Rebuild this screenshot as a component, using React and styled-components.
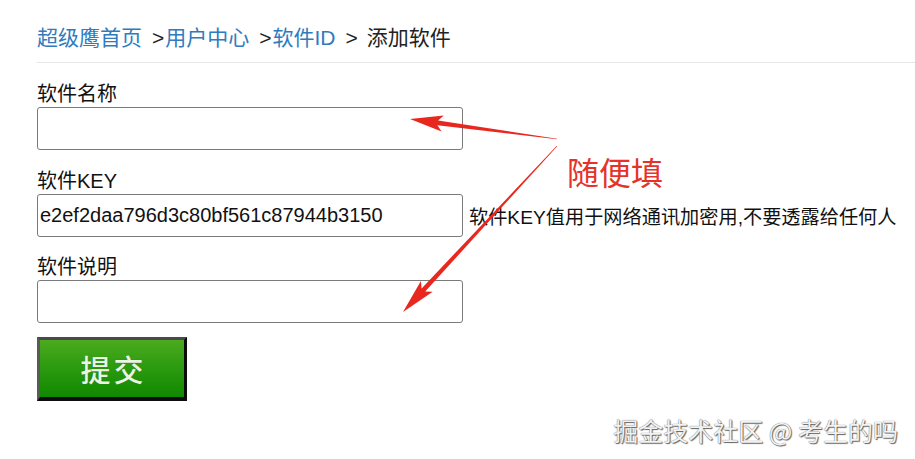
import styled, { createGlobalStyle } from 'styled-components'

const GlobalStyle = createGlobalStyle`
  html, body {
    margin: 0;
    padding: 0;
    background: #fff;
  }
  body {
    font-family: "Liberation Sans", "Noto Sans CJK SC", sans-serif;
  }
`

const Page = styled.div`
  position: relative;
  width: 915px;
  height: 459px;
  overflow: hidden;
  background: #fff;
`

const Breadcrumb = styled.div`
  margin-left: 37px;
  height: 63px;
  border-bottom: 1px solid #e6e6e6;
  display: flex;
  align-items: flex-start;
  padding-top: 24px;
  box-sizing: border-box;
  font-size: 21px;
  line-height: 28px;
  color: #222;
  white-space: pre;
`

const Crumb = styled.a`
  color: #2f7bbd;
  text-decoration: none;
`

const Sep = styled.span`
  margin: 0 ${p => p.$right || 1}px 0 ${p => p.$left || 10}px;
`

const Form = styled.div`
  padding: 19px 0 0 37px;
  display: flex;
  flex-direction: column;
`

const Field = styled.div`
  display: flex;
  flex-direction: column;
  margin-bottom: ${p => p.$gap || 18}px;
`

const Label = styled.div`
  font-size: 20px;
  line-height: 24px;
  color: #111;
  margin-bottom: 1px;
`

const Row = styled.div`
  display: flex;
  align-items: center;
`

const Input = styled.input`
  width: 426px;
  height: 43px;
  box-sizing: border-box;
  border: 1px solid #7a7a7a;
  border-radius: 3px;
  padding: 0 2px;
  font-family: "Liberation Sans", sans-serif;
  font-size: 20px;
  color: #111;
  background: #fff;
  outline: none;
`

const Hint = styled.span`
  margin-left: 6px;
  font-size: 19.2px;
  color: #111;
  white-space: nowrap;
`

const SubmitButton = styled.button`
  width: 150px;
  height: 64px;
  box-sizing: border-box;
  border-style: solid;
  border-width: 3px 3px 4px 3px;
  border-color: #4a4a4a #0c0c0c #0c0c0c #5a5a5a;
  background: linear-gradient(to bottom, #4caa1e 0%, #2e9c10 45%, #0f8800 100%);
  color: #e9f4e2;
  font-family: "Noto Sans CJK SC", sans-serif;
  font-size: 30px;
  font-weight: 500;
  letter-spacing: 3px;
  padding: 0 0 2px 3px;
  text-shadow: 0 0 1px #2a6a10;
  cursor: pointer;
`

const Note = styled.div`
  position: absolute;
  left: 567px;
  top: 148px;
  font-family: "Noto Sans CJK SC", sans-serif;
  font-size: 32px;
  color: #e5332a;
`

const Arrows = styled.svg`
  position: absolute;
  left: 0;
  top: 0;
  pointer-events: none;
`

const Watermark = styled.div`
  position: absolute;
  right: 17px;
  top: 412px;
  font-family: "Noto Sans CJK SC", sans-serif;
  font-size: 25px;
  color: #f2f2f2;
  text-shadow: 0 0 1px #444, 1px 1px 1px #666;
  white-space: pre;
`

function arrowPoints(tip, tail, headLen = 28, headHalf = 8, shaftHalf = 2.4, tailHalf = 0.3) {
  const dx = tail[0] - tip[0]
  const dy = tail[1] - tip[1]
  const len = Math.hypot(dx, dy)
  const ux = dx / len
  const uy = dy / len
  const nx = -uy
  const ny = ux
  const bx = tip[0] + ux * headLen
  const by = tip[1] + uy * headLen
  const cx = tip[0] + ux * (headLen + 5)
  const cy = tip[1] + uy * (headLen + 5)
  const pts = [
    tip,
    [cx + nx * headHalf, cy + ny * headHalf],
    [bx + nx * shaftHalf, by + ny * shaftHalf],
    [tail[0] + nx * tailHalf, tail[1] + ny * tailHalf],
    [tail[0] - nx * tailHalf, tail[1] - ny * tailHalf],
    [bx - nx * shaftHalf, by - ny * shaftHalf],
    [cx - nx * headHalf, cy - ny * headHalf],
  ]
  return pts.map(p => p[0].toFixed(1) + ',' + p[1].toFixed(1)).join(' ')
}

function App() {
  return (
    <Page>
      <GlobalStyle />
      <Breadcrumb>
        <Crumb>超级鹰首页</Crumb>
        <Sep>&gt;</Sep>
        <Crumb>用户中心</Crumb>
        <Sep>&gt;</Sep>
        <Crumb>软件ID</Crumb>
        <Sep $right={9}>&gt;</Sep>
        <span>添加软件</span>
      </Breadcrumb>
      <Form>
        <Field $gap={19}>
          <Label>软件名称</Label>
          <Input />
        </Field>
        <Field $gap={18}>
          <Label>软件KEY</Label>
          <Row>
            <Input defaultValue="e2ef2daa796d3c80bf561c87944b3150" />
            <Hint>软件KEY值用于网络通讯加密用,不要透露给任何人</Hint>
          </Row>
        </Field>
        <Field $gap={14}>
          <Label>软件说明</Label>
          <Input />
        </Field>
        <div>
          <SubmitButton>提交</SubmitButton>
        </div>
      </Form>
      <Note>随便填</Note>
      <Arrows width="915" height="459" viewBox="0 0 915 459">
        <polygon points={arrowPoints([410, 119], [557, 139])} fill="#e8281e" />
        <polygon points={arrowPoints([403, 312], [557, 146], 30)} fill="#e8281e" />
      </Arrows>
      <Watermark>掘金技术社区 @ 考生的吗</Watermark>
    </Page>
  )
}

export default App
